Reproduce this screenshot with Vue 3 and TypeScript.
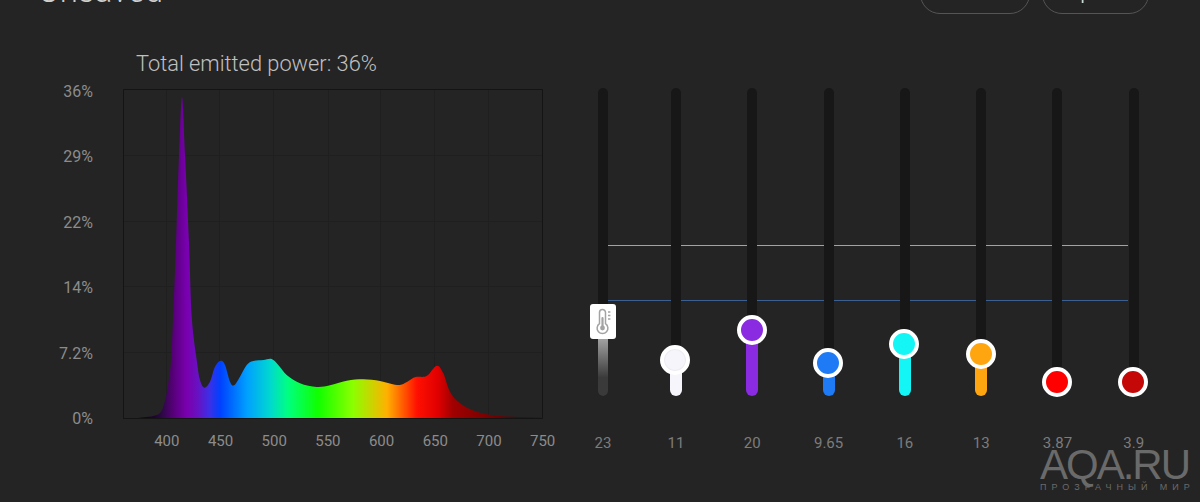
<script setup lang="ts">
type Channel = { value: string; color: string; thumb: number; kind?: 'temp' | 'white' }

const yLabels = ['36%', '29%', '22%', '14%', '7.2%', '0%']
const xLabels = [400, 450, 500, 550, 600, 650, 700, 750]
const gridX = [43.5, 96.5, 150.5, 205.5, 257.5, 311.5, 365.5]
const gridY = [66.5, 132.5, 197.5, 263.5]

// outline of the spectrum, in chart pixels
const points: [number, number][] = [
  [0, 329.5], [17, 328.7], [33.7, 326], [40.3, 317.7], [45.3, 294.3], [48.7, 261], [53, 154], [56, 66], [59, 8],
  [62, 66], [66, 154], [68.7, 227.7], [73.7, 271], [77, 291], [81.3, 298.7], [87, 292.7], [92, 277.7],
  [97.7, 271.7], [102, 276], [107, 292.7], [111, 296.3], [117, 287.7], [123.7, 276], [130.3, 272],
  [140.3, 271], [148.7, 270], [155.3, 276], [163.7, 286], [177, 294.3], [193.7, 298], [207, 296.3],
  [223.7, 291.7], [240.3, 290.3], [257, 292], [272, 295.7], [280.3, 295], [292, 288.3], [303.7, 287],
  [313.7, 276.7], [320.3, 284.3], [327, 302.7], [337, 314.3], [353.7, 322.7], [377, 327], [418.7, 329]
]

function smooth(pts: [number, number][]): string {
  let d = `M${pts[0][0]} ${pts[0][1]}`
  for (let i = 0; i < pts.length - 1; i++) {
    const p0 = pts[Math.max(i - 1, 0)]
    const p1 = pts[i]
    const p2 = pts[i + 1]
    const p3 = pts[Math.min(i + 2, pts.length - 1)]
    const c1x = p1[0] + (p2[0] - p0[0]) / 6
    const c1y = p1[1] + (p2[1] - p0[1]) / 6
    const c2x = p2[0] - (p3[0] - p1[0]) / 6
    const c2y = p2[1] - (p3[1] - p1[1]) / 6
    d += ` C${c1x.toFixed(1)} ${c1y.toFixed(1)} ${c2x.toFixed(1)} ${c2y.toFixed(1)} ${p2[0]} ${p2[1]}`
  }
  return d + ' L419 330 L0 330 Z'
}

const spectrum = smooth(points)

const stops: [number, string][] = [
  [17, '#14001e'], [32, '#1e0530'], [40, '#30084a'], [50, '#560078'], [64, '#7a00b0'], [74, '#6a10c0'], [87, '#3a30e8'],
  [97, '#0040ff'], [124, '#00a0ff'], [147, '#00d8d0'], [165, '#00ff80'], [195, '#10ff00'],
  [230, '#8cff00'], [264, '#ffb000'], [294, '#ff1000'], [315, '#e00000'], [330, '#a00000'],
  [345, '#900000'], [420, '#400000']
]

const channels: Channel[] = [
  { value: '23', color: 'linear-gradient(#ffffff, #3a3a3a 80%)', thumb: 92, kind: 'temp' },
  { value: '11', color: '#f5f5fb', thumb: 37, kind: 'white' },
  { value: '20', color: '#8a2be2', thumb: 66.5 },
  { value: '9.65', color: '#1e7bf5', thumb: 33.5 },
  { value: '16', color: '#14f5f5', thumb: 53 },
  { value: '13', color: '#ffa510', thumb: 43 },
  { value: '3.87', color: '#ff0000', thumb: 15 },
  { value: '3.9', color: '#c40808', thumb: 15 }
]
</script>

<template>
  <div class="page">
    <header class="top">
      <h1>Unsaved</h1>
      <div class="actions">
        <button class="btn btn-save">Save</button>
        <button class="btn btn-upload">Upload</button>
      </div>
    </header>

    <main class="body">
      <section class="chart-col">
        <div class="chart-title">Total emitted power: 36%</div>
        <div class="chart-row">
          <div class="y-axis">
            <span v-for="l in yLabels" :key="l">{{ l }}</span>
          </div>
          <svg class="plot" viewBox="0 0 420 330" width="420" height="330">
            <defs>
              <linearGradient id="spec" gradientUnits="userSpaceOnUse" x1="0" y1="0" x2="420" y2="0">
                <stop v-for="s in stops" :key="s[0]" :offset="s[0] / 420" :stop-color="s[1]" />
              </linearGradient>
            </defs>
            <line v-for="x in gridX" :key="x" class="grid" :x1="x" :x2="x" y1="0" y2="330" />
            <line v-for="y in gridY" :key="y" class="grid" x1="0" x2="420" :y1="y" :y2="y" />
            <path :d="spectrum" fill="url(#spec)" />
            <path class="frame" d="M0.5 0.5H419.5V329.5H0.5Z" />
          </svg>
        </div>
        <div class="x-axis">
          <span v-for="l in xLabels" :key="l">{{ l }}</span>
        </div>
      </section>

      <section class="sliders">
        <div class="limit limit-orange"></div>
        <div class="limit limit-blue"></div>
        <div
          v-for="c in channels"
          :key="c.value"
          class="channel"
          :class="{ 'channel-temp': c.kind === 'temp' }"
        >
          <div class="track">
            <div
              class="fill"
              :class="{ 'fill-temp': c.kind === 'temp' }"
              :style="{ height: c.thumb + 'px', background: c.color }"
            ></div>
            <div v-if="c.kind === 'temp'" class="thumb-temp" :style="{ bottom: c.thumb - 35 + 'px' }">
              <svg viewBox="0 0 26 35" width="26" height="35" fill="none" stroke="#a3a3a3">
                <path stroke-width="1.5" d="M9.5 8.5a3 3 0 0 1 6 0v11.2a5.4 5.4 0 1 1-6 0z" />
                <path stroke-width="2.2" stroke-linecap="round" d="M12.5 14v10" />
                <circle cx="12.5" cy="24" r="2.4" fill="#a3a3a3" stroke="none" />
                <path stroke-width="1.3" d="M18 8h2.4M18 11.5h2.4M18 15h2.4" />
              </svg>
            </div>
            <div
              v-else
              class="thumb"
              :class="{ 'thumb-white': c.kind === 'white' }"
              :style="{ bottom: c.thumb - 15.5 + 'px', background: c.color }"
            ></div>
          </div>
          <span class="value">{{ c.value }}</span>
        </div>
      </section>
    </main>

    <div class="watermark">
      <div class="wm-logo">AQA.RU</div>
      <div class="wm-sub">ПРОЗРАЧНЫЙ МИР</div>
    </div>
  </div>
</template>

<style scoped>
.page {
  position: relative;
  width: 1200px;
  height: 502px;
  overflow: hidden;
  background: #242424;
  font-family: Roboto, "Liberation Sans", sans-serif;
}

.top {
  display: flex;
  justify-content: space-between;
  align-items: flex-end;
  height: 40px;
  margin-top: -26px;
  padding: 0 51px 0 38px;
}
.top h1 {
  margin: 0 0 3px;
  font-size: 33px;
  line-height: 40px;
  font-weight: 300;
  color: #cfcfcf;
}
.actions { display: flex; gap: 12px; }
.btn {
  height: 40px;
  padding: 0;
  border: 1px solid #555;
  border-radius: 20px;
  background: transparent;
  color: #e0e0e0;
  font: 400 16px Roboto, sans-serif;
}
.btn-save { width: 110px; }
.btn-upload { width: 107px; }

.body {
  display: flex;
  padding-top: 37px;
}

.chart-col {
  width: 580px;
  flex-shrink: 0;
}
.chart-title {
  margin-left: 136px;
  height: 38px;
  font-size: 21.8px;
  line-height: 26px;
  font-weight: 300;
  color: #c0c0c0;
}
.chart-row {
  display: flex;
  height: 330px;
}
.y-axis {
  width: 93px;
  margin-right: 30px;
  margin-top: -6px;
  height: 345px;
  display: flex;
  flex-direction: column;
  justify-content: space-between;
  align-items: flex-end;
  font-size: 16px;
  line-height: 18px;
  color: #8c8c8c;
}
.plot { display: block; }
.grid { stroke: #1f1f1f; stroke-width: 1; }
.frame { fill: none; stroke: #141414; stroke-width: 1; }

.x-axis {
  display: flex;
  margin: 13px 0 0 140px;
  font-size: 15px;
  line-height: 18px;
  color: #8c8c8c;
}
.x-axis span {
  width: 53.7px;
  flex-shrink: 0;
  text-align: center;
}

.sliders {
  position: relative;
  display: flex;
  margin-left: -11.85px;
  padding-top: 37px;
}
.channel {
  width: 76.3px;
  display: flex;
  flex-direction: column;
  align-items: center;
}
.channel-temp { width: 69.7px; }
.track {
  position: relative;
  z-index: 1;
  width: 10px;
  height: 308px;
  border-radius: 5px;
  background: #171717;
}
.fill {
  position: absolute;
  left: -1px;
  right: -1px;
  bottom: 0;
  border-radius: 6px;
}
.fill-temp { left: 0; right: 0; }
.thumb {
  position: absolute;
  left: -10.5px;
  width: 22px;
  height: 22px;
  box-sizing: content-box;
  border: 4.5px solid #fff;
  border-radius: 50%;
}
.thumb-white { box-shadow: inset 0 0 0 1px #ececf2; }
.thumb-temp {
  position: absolute;
  left: -8px;
  width: 26px;
  height: 35px;
  border-radius: 3px;
  background: #fff;
}
.value {
  margin-top: 38px;
  font-size: 15px;
  line-height: 18px;
  color: #7c7c7c;
}
.limit {
  position: absolute;
  left: 40px;
  width: 520px;
  height: 1px;
}
.limit-orange { top: 194px; background: #cc9a62; }
.limit-blue { top: 249px; background: #3c5f92; }

.watermark {
  position: absolute;
  right: 10px;
  bottom: 10px;
  width: 150px;
  color: #6a6a6a;
  font-family: "Liberation Sans", sans-serif;
}
.wm-logo {
  font-size: 42px;
  line-height: 32px;
  letter-spacing: -2px;
}
.wm-sub {
  margin-top: 2px;
  font-size: 9px;
  line-height: 9px;
  letter-spacing: 5px;
  white-space: nowrap;
}
</style>
